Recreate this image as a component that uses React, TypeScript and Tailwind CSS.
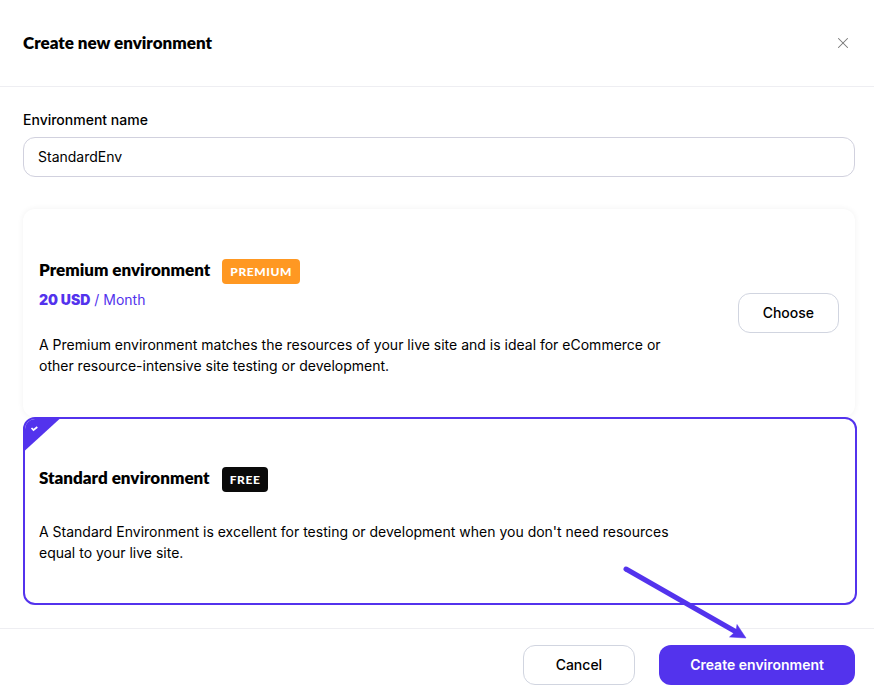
import React, { useState } from 'react';
import { X } from 'lucide-react';

const App = () => {
  const [name, setName] = useState('StandardEnv');

  return (
    <div className="flex min-h-screen flex-col bg-white font-['Inter',sans-serif] text-sm text-black">
      <header className="flex h-[87px] items-center justify-between border-b border-[#eeeef2] pr-[22px] pl-[23px]">
        <h1 className="font-['Lato',sans-serif] text-[17px] leading-[22px] font-extrabold">Create new environment</h1>
        <button type="button" aria-label="Close" className="text-[#777]">
          <X size={18} strokeWidth={1.4} />
        </button>
      </header>

      <main className="pt-[23px] pr-[19px] pb-[23px] pl-[23px]">
        <label htmlFor="env-name" className="block leading-5 font-medium">Environment name</label>
        <input
          id="env-name"
          value={name}
          onChange={(e) => setName(e.target.value)}
          className="mt-[7px] block h-10 w-full rounded-xl border border-[#d1d1de] px-3.5 pb-0.5 outline-none"
        />

        {/* Premium plan */}
        <section className="mt-8 flex items-center justify-between rounded-xl px-4 py-10 shadow-[0_0_6px_rgba(0,0,0,0.06)]">
          <div className="max-w-[640px] pt-2.5 pb-px">
            <div className="flex items-start gap-3">
              <h2 className="font-['Lato',sans-serif] text-[17px] leading-[22px] font-extrabold">Premium environment</h2>
              <span className="rounded bg-[#ff9822] px-2 font-['Lato',sans-serif] text-xs leading-[25px] font-black tracking-wider text-white">PREMIUM</span>
            </div>
            <p className="mt-[5px] leading-[21px] text-[#5333ed]">
              <strong className="font-black">20 USD</strong> / Month
            </p>
            <p className="mt-6 leading-[21px]">
              A Premium environment matches the resources of your live site and is ideal for eCommerce or other resource-intensive site testing or development.
            </p>
          </div>
          <button type="button" className="h-10 rounded-xl border border-[#d1d5e0] px-6 font-medium">Choose</button>
        </section>

        {/* Standard plan (selected) */}
        <section className="relative -mr-0.5 overflow-hidden rounded-xl border-2 border-[#5333ed] bg-white px-3.5 pt-12 pb-10">
          <svg width="35" height="32" viewBox="0 0 35 32" className="absolute top-0 left-0" aria-hidden="true">
            <path d="M0 0H34.500L0 31.500Z" fill="#5333ed" />
            <path d="M6.500 9L8.500 11L12.300 8" fill="none" stroke="#fff" strokeWidth="1.700" />
          </svg>
          <div className="max-w-[640px]">
            <div className="flex items-start gap-3">
              <h2 className="font-['Lato',sans-serif] text-[17px] leading-[22px] font-extrabold">Standard environment</h2>
              <span className="rounded bg-[#0a0a0a] px-2 font-['Lato',sans-serif] text-xs leading-[25px] font-black tracking-wider text-white">FREE</span>
            </div>
            <p className="mt-[29px] leading-[21px]">
              A Standard Environment is excellent for testing or development when you don't need resources equal to your live site.
            </p>
          </div>
        </section>
      </main>

      <footer className="relative flex justify-end gap-6 border-t border-[#eeeef2] py-4 pr-[19px]">
        <button type="button" className="h-10 rounded-xl border border-[#d1d5e0] px-8 font-medium">Cancel</button>
        <button type="button" className="h-10 rounded-xl bg-[#5333ed] px-[31px] font-semibold text-white">Create environment</button>

        {/* Pointer to the submit button */}
        <svg width="126" height="76" viewBox="0 0 126 76" className="pointer-events-none absolute -top-[65px] right-[126px]" aria-hidden="true">
          <path d="M4 5L116 69" stroke="#5333ed" strokeWidth="5" strokeLinecap="round" />
          <path d="M124 74L115 60.500L114 67L107.500 73Z" fill="#5333ed" stroke="#5333ed" strokeWidth="0.500" />
        </svg>
      </footer>
    </div>
  );
};

export default App;
